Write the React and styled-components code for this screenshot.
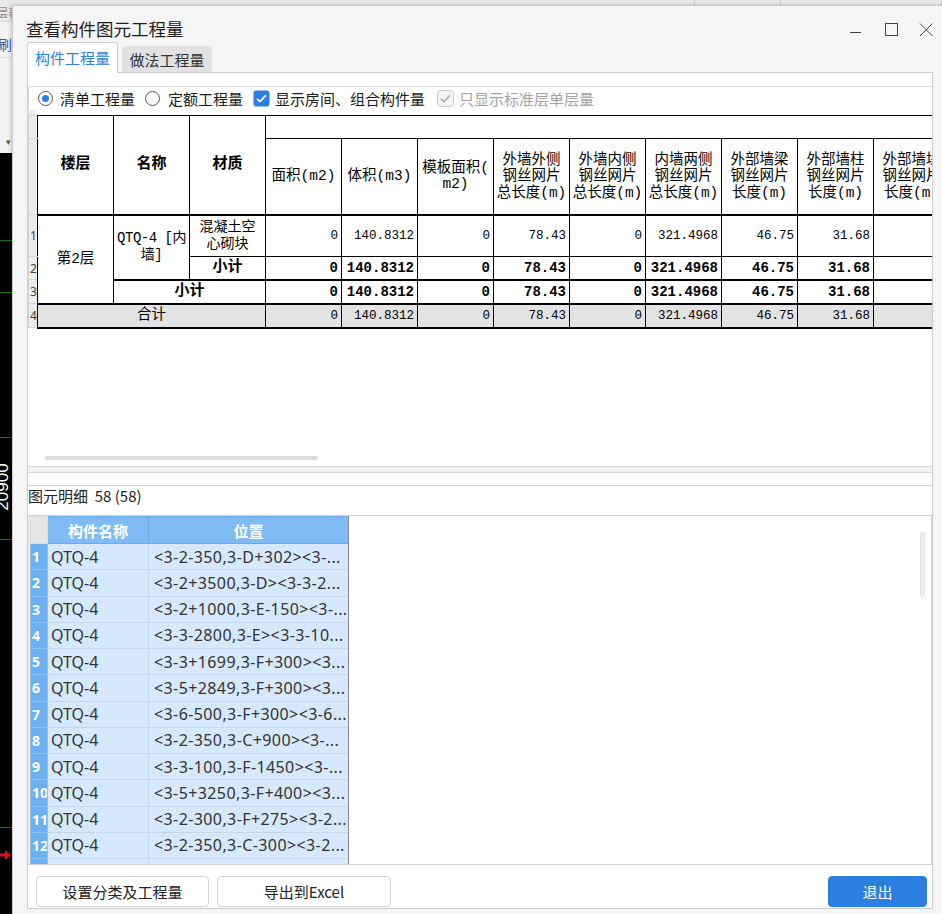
import React from "react";
import styled, { createGlobalStyle } from "styled-components";

const UI = `"Noto Sans CJK SC", "Noto Sans", sans-serif`;
const SHEET = `"Liberation Mono", "Noto Sans CJK SC", monospace`;
const LATIN = `"Noto Sans", "Noto Sans CJK SC", sans-serif`;

const GlobalStyle = createGlobalStyle`
  html, body { margin: 0; padding: 0; background: #000; }
  body { font-family: ${UI}; }
`;

const sheetCols = [
  { h: ["面积(m2)"], v: "0" },
  { h: ["体积(m3)"], v: "140.8312" },
  { h: ["模板面积(", "m2)"], v: "0" },
  { h: ["外墙外侧", "钢丝网片", "总长度(m)"], v: "78.43" },
  { h: ["外墙内侧", "钢丝网片", "总长度(m)"], v: "0" },
  { h: ["内墙两侧", "钢丝网片", "总长度(m)"], v: "321.4968" },
  { h: ["外部墙梁", "钢丝网片", "长度(m)"], v: "46.75" },
  { h: ["外部墙柱", "钢丝网片", "长度(m)"], v: "31.68" },
  { h: ["外部墙垛", "钢丝网片", "长度(m)"], v: "" },
];

const places = [
  "<3-2-350,3-D+302><3-...",
  "<3-2+3500,3-D><3-3-2...",
  "<3-2+1000,3-E-150><3-...",
  "<3-3-2800,3-E><3-3-10...",
  "<3-3+1699,3-F+300><3...",
  "<3-5+2849,3-F+300><3...",
  "<3-6-500,3-F+300><3-6...",
  "<3-2-350,3-C+900><3-...",
  "<3-3-100,3-F-1450><3-...",
  "<3-5+3250,3-F+400><3...",
  "<3-2-300,3-F+275><3-2...",
  "<3-2-350,3-C-300><3-2...",
];

export default function App() {
  return (
    <>
      <GlobalStyle />
      <Desktop>
        <AppTop>
          <AppHead>
            <AppHeadCell $w={695}>层表</AppHeadCell>
            <AppHeadCell $w={86} />
            <AppHeadCell />
          </AppHead>
          <AppTool>刷选</AppTool>
          <AppDrop>▾</AppDrop>
        </AppTop>
        <Canvas>
          <svg width="942" height="761">
            {[87, 139, 284, 386, 674].map((y) => (
              <line key={y} x1="0" y1={y + 0.5} x2="942" y2={y + 0.5} stroke="#0d7a0d" />
            ))}
            <text
              transform="translate(8 334) rotate(-90)"
              textAnchor="middle"
              fill="#fff"
              fontSize="17"
              fontFamily="Liberation Sans, sans-serif"
            >
              20900
            </text>
            <line x1="0" y1="702" x2="6" y2="702" stroke="#e01010" strokeWidth="3" />
            <path d="M5 697 L11 702 L5 707 Z" fill="#e01010" />
          </svg>
        </Canvas>

        <Window>
          <TitleBar>
            <Title>查看构件图元工程量</Title>
            <Controls>
              <svg width="14" height="14">
                <line x1="1" y1="9.5" x2="12" y2="9.5" stroke="#444" />
              </svg>
              <svg width="14" height="14">
                <rect x="1.5" y="0.5" width="12" height="12" fill="none" stroke="#444" />
              </svg>
              <svg width="14" height="14">
                <path d="M1 0.5 L13.5 13 M13.5 0.5 L1 13" stroke="#444" />
              </svg>
            </Controls>
          </TitleBar>

          <TabRow>
            <Tab $active>构件工程量</Tab>
            <Tab>做法工程量</Tab>
          </TabRow>

          <Panel>
            <OptionsBar>
              <Option $gap={7} $after={10}>
                <Radio $on />
                清单工程量
              </Option>
              <Option $gap={8} $after={10}>
                <Radio />
                定额工程量
              </Option>
              <Option $gap={5} $after={12}>
                <svg width="17" height="17">
                  <rect x="0.5" y="0.5" width="16" height="16" rx="3" fill="#2b7fe0" />
                  <path d="M4 8.8 L7 11.6 L13 5.2" stroke="#fff" strokeWidth="1.8" fill="none" />
                </svg>
                显示房间、组合构件量
              </Option>
              <Option $gap={5} $muted>
                <svg width="17" height="17">
                  <rect x="0.5" y="0.5" width="16" height="16" rx="3" fill="#f3f3f3" stroke="#c9c9c9" />
                  <path d="M4 8.8 L7 11.6 L13 5.2" stroke="#a9a9a9" strokeWidth="1.6" fill="none" />
                </svg>
                只显示标准层单层量
              </Option>
            </OptionsBar>

            <UpperGrid>
              <Sheet>
                <colgroup>
                  <RnCol />
                  {Array.from({ length: 12 }).map((_, i) => (
                    <DataCol key={i} />
                  ))}
                </colgroup>
                <tbody>
                  <SheetRow $h={23}>
                    <RnCell />
                    <HeadCell rowSpan={2} $bold>楼层</HeadCell>
                    <HeadCell rowSpan={2} $bold>名称</HeadCell>
                    <HeadCell rowSpan={2} $bold>材质</HeadCell>
                    <HeadCell colSpan={9} />
                  </SheetRow>
                  <SheetRow $h={76}>
                    <RnCell />
                    {sheetCols.map((c, i) => (
                      <HeadCell key={i}>
                        {c.h.map((l, j) => (
                          <div key={j}>{l}</div>
                        ))}
                      </HeadCell>
                    ))}
                  </SheetRow>
                  <SheetRow $h={42} $thick>
                    <RnCell>1</RnCell>
                    <TextCell rowSpan={3}>第2层</TextCell>
                    <TextCell rowSpan={2}>
                      <NameLine>QTQ-4 [内</NameLine>
                      <NameLine>墙]</NameLine>
                    </TextCell>
                    <TextCell>
                      <div>混凝土空</div>
                      <div>心砌块</div>
                    </TextCell>
                    {sheetCols.map((c, i) => (
                      <NumCell key={i}>{c.v}</NumCell>
                    ))}
                  </SheetRow>
                  <SheetRow $h={23}>
                    <RnCell>2</RnCell>
                    <TextCell $bold>小计</TextCell>
                    {sheetCols.map((c, i) => (
                      <NumCell key={i} $bold>{c.v}</NumCell>
                    ))}
                  </SheetRow>
                  <SheetRow $h={24} $thick>
                    <RnCell>3</RnCell>
                    <TextCell colSpan={2} $bold>小计</TextCell>
                    {sheetCols.map((c, i) => (
                      <NumCell key={i} $bold>{c.v}</NumCell>
                    ))}
                  </SheetRow>
                  <SheetRow $h={24} $thick $total>
                    <RnCell>4</RnCell>
                    <TextCell colSpan={3}>合计</TextCell>
                    {sheetCols.map((c, i) => (
                      <NumCell key={i}>{c.v}</NumCell>
                    ))}
                  </SheetRow>
                </tbody>
              </Sheet>
              <HScroll />
            </UpperGrid>

            <Splitter />

            <DetailTitle>图元明细  58 (58)</DetailTitle>

            <LowerArea>
              <DetailFrame>
                <DetailTable>
                  <colgroup>
                    <NumColD />
                    <NameColD />
                    <PlaceColD />
                  </colgroup>
                  <thead>
                    <tr>
                      <DetailHead $corner />
                      <DetailHead>构件名称</DetailHead>
                      <DetailHead>位置</DetailHead>
                    </tr>
                  </thead>
                  <tbody>
                    {places.map((p, i) => (
                      <DetailRow key={i}>
                        <DetailNum>{i + 1}</DetailNum>
                        <DetailCell>QTQ-4</DetailCell>
                        <DetailCell $place>{p}</DetailCell>
                      </DetailRow>
                    ))}
                    <DetailRow>
                      <DetailNum />
                      <DetailCell />
                      <DetailCell />
                    </DetailRow>
                  </tbody>
                </DetailTable>
              </DetailFrame>
              <EmptyArea>
                <VScroll />
              </EmptyArea>
            </LowerArea>

            <ButtonBar>
              <Button $w={173}>设置分类及工程量</Button>
              <Button $w={174}>导出到Excel</Button>
              <Button $w={99} $primary>退出</Button>
            </ButtonBar>
          </Panel>
        </Window>
      </Desktop>
    </>
  );
}

const Desktop = styled.div`
  position: relative;
  width: 942px;
  height: 914px;
  overflow: hidden;
  display: flex;
  flex-direction: column;
`;

const AppTop = styled.div`
  height: 153px;
  background: #f3f3f3;
  display: flex;
  flex-direction: column;
`;

const AppHead = styled.div`
  height: 22px;
  display: flex;
  background: #e9e9e9;
  border-bottom: 1px solid #d6d6d6;
  box-sizing: border-box;
`;

const AppHeadCell = styled.div`
  width: ${(p) => (p.$w ? `${p.$w}px` : "auto")};
  flex: ${(p) => (p.$w ? "none" : 1)};
  box-sizing: border-box;
  border-right: 1px solid #c9c9c9;
  font-size: 11px;
  line-height: 14px;
  padding-top: 5px;
  color: #8a8a8a;
  text-indent: -3px;
  white-space: nowrap;
  overflow: hidden;
`;

const AppTool = styled.div`
  height: 36px;
  box-sizing: border-box;
  padding-top: 12px;
  font-size: 14px;
  line-height: 20px;
  color: #3d5a8a;
  text-indent: -2px;
  border-bottom: 1px solid #dedede;
`;

const AppDrop = styled.div`
  flex: 1;
  display: flex;
  align-items: flex-end;
  padding: 0 0 5px 6px;
  font-size: 9px;
  color: #555;
`;

const Canvas = styled.div`
  flex: 1;
  background: #000;
  svg {
    display: block;
  }
`;

const Window = styled.div`
  position: absolute;
  left: 12px;
  top: 5px;
  width: 936px;
  height: 920px;
  box-sizing: border-box;
  border: 1px solid #cbcbcb;
  background: #f5f5f5;
  display: flex;
  flex-direction: column;
  padding-left: 14px;
  font-family: ${UI};
  box-shadow: -1px 0 4px rgba(0, 0, 0, 0.2);
`;

const TitleBar = styled.div`
  height: 36px;
  display: flex;
  align-items: flex-start;
`;

const Title = styled.div`
  flex: 1;
  padding-top: 13px;
  font-size: 17.5px;
  line-height: 20px;
  color: #1f1f1f;
  margin-left: -1px;
`;

const Controls = styled.div`
  display: flex;
  gap: 21px;
  padding-top: 17px;
  margin-right: 14px;
  svg {
    display: block;
  }
`;

const TabRow = styled.div`
  height: 30px;
  display: flex;
  align-items: flex-end;
  gap: 4px;
  position: relative;
  z-index: 1;
`;

const Tab = styled.div`
  width: ${(p) => (p.$active ? 91 : 90)}px;
  height: ${(p) => (p.$active ? 31 : 26)}px;
  margin-bottom: ${(p) => (p.$active ? -1 : 0)}px;
  box-sizing: border-box;
  border: 1px solid ${(p) => (p.$active ? "#cfcfcf" : "#e2e2e2")};
  border-bottom: none;
  border-radius: 3px 3px 0 0;
  background: ${(p) => (p.$active ? "#fff" : "#e2e2e2")};
  color: ${(p) => (p.$active ? "#2f7fe0" : "#333")};
  font-size: 15px;
  display: flex;
  align-items: center;
  justify-content: center;
  padding-bottom: ${(p) => (p.$active ? 2 : 0)}px;
`;

const Panel = styled.div`
  width: 906px;
  height: 837px;
  box-sizing: border-box;
  border: 1px solid #cdcdcd;
  background: #fff;
  display: flex;
  flex-direction: column;
`;

const OptionsBar = styled.div`
  margin-top: 13px;
  height: 24px;
  box-sizing: border-box;
  border-top: 1px solid #dcdcdc;
  border-left: 1px solid #dcdcdc;
  border-top-left-radius: 3px;
  display: flex;
  align-items: center;
  padding-left: 9px;
`;

const Option = styled.div`
  display: flex;
  align-items: center;
  gap: ${(p) => p.$gap}px;
  margin-right: ${(p) => p.$after || 0}px;
  font-size: 15px;
  color: ${(p) => (p.$muted ? "#a3a3a3" : "#1a1a1a")};
  white-space: nowrap;
  svg {
    display: block;
  }
`;

const Radio = styled.span`
  width: 15px;
  height: 15px;
  box-sizing: border-box;
  border-radius: 50%;
  border: 1px solid #555;
  display: flex;
  align-items: center;
  justify-content: center;
  &::after {
    content: "";
    width: 7px;
    height: 7px;
    border-radius: 50%;
    background: ${(p) => (p.$on ? "#2b7fe0" : "transparent")};
  }
`;

const UpperGrid = styled.div`
  height: 357px;
  box-sizing: border-box;
  border-bottom: 1px solid #d4d4d4;
  overflow: hidden;
  display: flex;
  flex-direction: column;
  background: linear-gradient(#ececec, #ececec) no-repeat 0 0 / 9px 6px;
`;

const Sheet = styled.table`
  border-collapse: collapse;
  table-layout: fixed;
  width: 921px;
  margin-top: 5px;
  font-family: ${SHEET};
  color: #000;
  flex: none;
`;

const RnCol = styled.col`
  width: 9px;
`;

const DataCol = styled.col`
  width: 76px;
`;

const SheetRow = styled.tr`
  height: ${(p) => p.$h}px;
  background: ${(p) => (p.$total ? "#e3e3e3" : "#fff")};
  & > td:not(:first-child) {
    ${(p) => (p.$thick ? "border-top-width: 2px;" : "")}
    ${(p) => (p.$total ? "border-bottom-width: 2px;" : "")}
  }
`;

const RnCell = styled.td`
  padding: 0 0 0 1px;
  background: #ececec;
  border: 1px solid #d6d6d6;
  border-right: 1px solid #000;
  font-family: ${LATIN};
  font-size: 12px;
  color: #444;
  text-align: left;
  overflow: hidden;
`;

const HeadCell = styled.td`
  padding: 0;
  border: 1px solid #000;
  text-align: center;
  vertical-align: middle;
  font-size: ${(p) => (p.$bold ? 15 : 14.5)}px;
  font-weight: ${(p) => (p.$bold ? 700 : 400)};
  line-height: 16.5px;
  white-space: nowrap;
  overflow: hidden;
`;

const TextCell = styled.td`
  padding: 0;
  border: 1px solid #000;
  text-align: center;
  vertical-align: middle;
  font-size: ${(p) => (p.$bold ? 15 : 14.5)}px;
  font-weight: ${(p) => (p.$bold ? 700 : 400)};
  line-height: 17px;
  white-space: nowrap;
  overflow: hidden;
  div {
    font-size: 14px;
  }
`;

const NameLine = styled.div`
  letter-spacing: -0.5px;
`;

const NumCell = styled.td`
  padding: 0 3px 0 0;
  border: 1px solid #000;
  text-align: right;
  vertical-align: middle;
  font-size: ${(p) => (p.$bold ? 14 : 12.5)}px;
  font-weight: ${(p) => (p.$bold ? 700 : 400)};
  white-space: nowrap;
  overflow: hidden;
`;

const HScroll = styled.div`
  margin-top: auto;
  margin-bottom: 6px;
  margin-left: 17px;
  width: 273px;
  height: 4px;
  border-radius: 2px;
  background: #dcdcdc;
  flex: none;
`;

const Splitter = styled.div`
  height: 18px;
  flex: none;
  background: linear-gradient(#f0f0f0 0 5px, #d9d9d9 5px 6px, #fff 6px);
`;

const DetailTitle = styled.div`
  height: 30px;
  box-sizing: border-box;
  border-top: 1px solid #d4d4d4;
  font-size: 15px;
  line-height: 20px;
  color: #222;
  white-space: pre;
  flex: none;
`;

const LowerArea = styled.div`
  height: 350px;
  box-sizing: border-box;
  border-top: 1px solid #d4d4d4;
  border-bottom: 1px solid #d0d0d0;
  border-right: 1px solid #d8d8d8;
  display: flex;
  padding-left: 2px;
  background: #ececec;
  flex: none;
`;

const DetailFrame = styled.div`
  width: 319px;
  height: 100%;
  overflow: hidden;
  box-sizing: border-box;
  border-right: 1px solid #888;
  background: #fff;
`;

const DetailTable = styled.table`
  border-collapse: collapse;
  table-layout: fixed;
  width: 318px;
`;

const NumColD = styled.col`
  width: 17px;
`;
const NameColD = styled.col`
  width: 101px;
`;
const PlaceColD = styled.col`
  width: 200px;
`;

const DetailHead = styled.th`
  height: 26px;
  padding: 0;
  background: ${(p) => (p.$corner ? "#e6e6e6" : "#80bbf5")};
  border: 1px solid ${(p) => (p.$corner ? "#dcdcdc" : "#6eaaea")};
  color: #fff;
  font-family: ${UI};
  font-size: 15px;
  font-weight: 700;
  text-align: center;
`;

const DetailRow = styled.tr`
  height: 26.25px;
`;

const DetailNum = styled.td`
  padding: 0 0 0 1px;
  background: #6db0f2;
  border: 1px solid #8cc2f6;
  color: #fff;
  font-family: ${LATIN};
  font-weight: 700;
  font-size: 14px;
  text-align: left;
  white-space: nowrap;
  overflow: hidden;
`;

const DetailCell = styled.td`
  padding: 0 0 0 ${(p) => (p.$place ? 5 : 3)}px;
  background: #d6e9fc;
  border: 1px solid #c6d7ea;
  color: #333;
  font-family: ${LATIN};
  font-size: 16px;
  letter-spacing: ${(p) => (p.$place ? 0.4 : 0)}px;
  white-space: nowrap;
  overflow: hidden;
`;

const EmptyArea = styled.div`
  flex: 1;
  background: #fff;
  display: flex;
  justify-content: flex-end;
  align-items: flex-start;
  padding: 16px 6px 0 0;
`;

const VScroll = styled.div`
  width: 5px;
  height: 65px;
  box-sizing: border-box;
  border-radius: 3px;
  border: 1px solid #e2e2e2;
  background: #efefef;
`;

const ButtonBar = styled.div`
  flex: 1;
  display: flex;
  align-items: flex-start;
  gap: 8px;
  padding: 11px 5px 0 8px;
`;

const Button = styled.div`
  width: ${(p) => p.$w}px;
  height: 31px;
  box-sizing: border-box;
  border: 1px solid ${(p) => (p.$primary ? "#2c7fe0" : "#d3d3d3")};
  border-radius: 4px;
  background: ${(p) => (p.$primary ? "#2c7fe0" : "#fff")};
  color: ${(p) => (p.$primary ? "#fff" : "#222")};
  margin-left: ${(p) => (p.$primary ? "auto" : "0")};
  font-size: 15px;
  display: flex;
  align-items: center;
  justify-content: center;
`;
